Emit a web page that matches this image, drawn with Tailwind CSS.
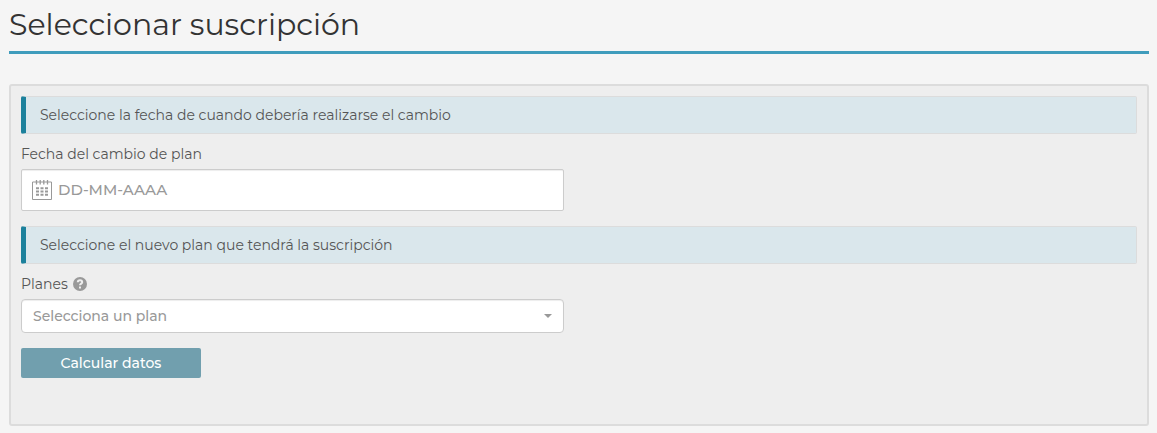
<!DOCTYPE html>
<html lang="es">

<head>
    <meta charset="UTF-8">
    <meta name="viewport" content="width=device-width, initial-scale=1.0">
    <title>Seleccionar suscripción</title>
    <script src="https://cdn.jsdelivr.net/npm/@tailwindcss/browser@4"></script>
</head>

<body class="bg-[#f5f5f5] text-[#555] font-['Montserrat','Inter',sans-serif] text-[14px] leading-5 font-normal pl-[9px] pr-2 pb-[7px]">
    <h1 class="text-[30px] leading-[49px] pb-[2px] font-normal text-[#333] border-b-3 border-[#3f9cbc]">Seleccionar suscripción</h1>

    <form class="mt-[30px] p-[10px] pb-[46px] bg-[#eee] border-2 border-[#dcdcdc] rounded-[3px]">
        <div class="py-2 pl-[14px] bg-[#dae7ec] border border-[#dcdcdc] border-l-5 border-l-[#1c819c] rounded-[2px]">
            Seleccione la fecha de cuando debería realizarse el cambio
        </div>

        <div class="grid grid-cols-2 gap-[30px] mt-[10px]">
            <div>
                <label for="fecha" class="block">Fecha del cambio de plan</label>
                <div class="relative mt-[5px]">
                    <svg class="absolute left-[11px] top-[11px]" width="20" height="20" viewBox="0 0 20 20" fill="none" stroke="#999">
                        <path d="M.5 2h19v17.500H.5z" />
                        <path d="M4.500 0v4.500M8.200 0v4.500M11.800 0v4.500M15.500 0v4.500" stroke-width="1.300" />
                        <path d="M4 8.200h12M4 11.500h12M4 14.800h12" stroke-width="2" stroke-dasharray="3 1.500" />
                    </svg>
                    <input id="fecha" type="text" name="fecha" placeholder="DD-MM-AAAA"
                        class="block w-full h-[42px] pl-9 pr-3 pb-[2px] bg-white border border-[#ccc] rounded-[2px] text-[15px] font-medium text-[#555] placeholder:text-[#999] shadow-[inset_0_1px_1px_rgba(0,0,0,0.075)]">
                </div>
            </div>
        </div>

        <div class="mt-[15px] py-2 pl-[14px] bg-[#dae7ec] border border-[#dcdcdc] border-l-5 border-l-[#1c819c] rounded-[2px]">
            Seleccione el nuevo plan que tendrá la suscripción
        </div>

        <div class="grid grid-cols-2 gap-[30px] mt-[10px]">
            <div>
                <div class="flex items-center gap-[5px]">
                    <label for="plan">Planes</label>
                    <svg width="14" height="14" viewBox="0 0 14 14" fill="none">
                        <circle cx="7" cy="7" r="7" fill="#999" />
                        <path d="M4.800 5.300C4.800 2.600 9.200 2.700 9.200 5.200C9.200 6.600 7 6.700 7 8.300" stroke="#eee" stroke-width="2" />
                        <path d="M6 9.500h2v2H6z" fill="#eee" />
                    </svg>
                </div>
                <div class="relative mt-[5px]">
                    <select id="plan" name="plan"
                        class="block w-full h-[34px] pl-[11px] pr-8 appearance-none bg-white border border-[#ccc] rounded-[4px] font-medium text-[#999] shadow-[inset_0_1px_1px_rgba(0,0,0,0.075)]">
                        <option>Selecciona un plan</option>
                    </select>
                    <svg class="absolute right-[12px] top-[15px] pointer-events-none" width="8" height="4" viewBox="0 0 8 4">
                        <path d="M0 0h8L4 4z" fill="#999" />
                    </svg>
                </div>
            </div>
        </div>

        <button type="submit" class="block mt-[15px] w-[180px] h-[30px] bg-[#719fae] text-white font-medium rounded-[2px]">Calcular datos</button>
    </form>
</body>

</html>
